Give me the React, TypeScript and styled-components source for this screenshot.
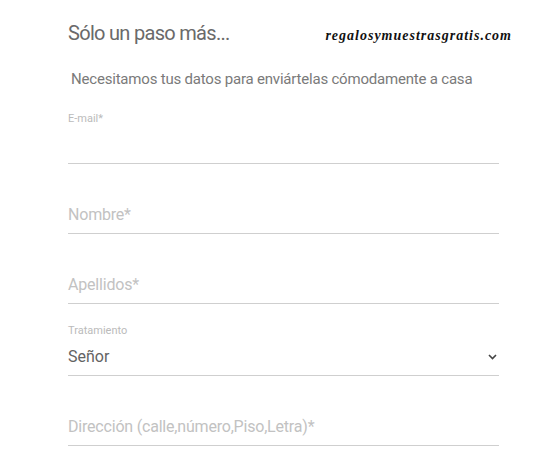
import styled, { createGlobalStyle } from "styled-components";

const GlobalStyle = createGlobalStyle`
  html, body {
    margin: 0;
    padding: 0;
    background: #ffffff;
  }
  body {
    font-family: Roboto, "Noto Sans", Arial, sans-serif;
  }
`;

type FieldData = {
  label?: string;
  placeholder?: string;
  value?: string;
  select?: boolean;
};

const fields: FieldData[] = [
  { label: "E-mail*" },
  { placeholder: "Nombre*" },
  { placeholder: "Apellidos*" },
  { label: "Tratamiento", value: "Señor", select: true },
  { placeholder: "Dirección (calle,número,Piso,Letra)*" },
];

const Chevron = () => (
  <svg width="9" height="6" viewBox="0 0 9 6">
    <path d="M1 1 L4.5 4.5 L8 1" fill="none" stroke="#444" strokeWidth="1.6" />
  </svg>
);

export default function App() {
  return (
    <>
      <GlobalStyle />
      <Page>
        <Header>
          <Title>Sólo un paso más...</Title>
          <Logo>regalosymuestrasgratis.com</Logo>
        </Header>
        <Subtitle>Necesitamos tus datos para enviártelas cómodamente a casa</Subtitle>
        <Form>
          {fields.map((f, i) => (
            <Field key={i} tall={f.select}>
              {f.label && <Label>{f.label}</Label>}
              <ValueRow>
                {f.value ? (
                  <Value>{f.value}</Value>
                ) : (
                  <Placeholder>{f.placeholder ?? ""}</Placeholder>
                )}
                {f.select && <Chevron />}
              </ValueRow>
            </Field>
          ))}
        </Form>
      </Page>
    </>
  );
}

const Page = styled.div`
  width: 540px;
  height: 463px;
  overflow: hidden;
  box-sizing: border-box;
  padding: 0 41px 0 68px;
`;

const Header = styled.div`
  display: flex;
  justify-content: space-between;
  align-items: flex-start;
  margin-right: -13px;
  padding-top: 20px;
`;

const Title = styled.h1`
  margin: 0;
  font-size: 20px;
  line-height: 26px;
  font-weight: 400;
  color: #6a6a6a;
  letter-spacing: -0.7px;
`;

const Logo = styled.div`
  font-family: "Liberation Serif", "DejaVu Serif", serif;
  font-style: italic;
  font-weight: 700;
  font-size: 14px;
  line-height: 18px;
  letter-spacing: 1px;
  color: #111;
  padding-top: 7px;
`;

const Subtitle = styled.p`
  margin: 24px 0 0 3px;
  font-size: 15px;
  line-height: 18px;
  color: #7a7a7a;
  letter-spacing: -0.2px;
`;

const Form = styled.div`
  display: flex;
  flex-direction: column;
  margin-top: 6px;
`;

const Field = styled.div<{ tall?: boolean }>`
  display: flex;
  flex-direction: column;
  justify-content: flex-end;
  height: ${(p) => (p.tall ? 71 : 69)}px;
  border-bottom: 1px solid #cfcfcf;
`;

const Label = styled.div`
  font-size: 11px;
  line-height: 14px;
  color: #bbbbbb;
  margin-bottom: 9px;
`;

const ValueRow = styled.div`
  display: flex;
  align-items: center;
  justify-content: space-between;
  height: 20px;
  padding: 0 2px 8px 0;
`;

const Placeholder = styled.span`
  font-size: 16px;
  line-height: 20px;
  color: #c2c2c2;
  letter-spacing: -0.2px;
`;

const Value = styled.span`
  font-size: 16px;
  line-height: 20px;
  color: #636363;
`;
